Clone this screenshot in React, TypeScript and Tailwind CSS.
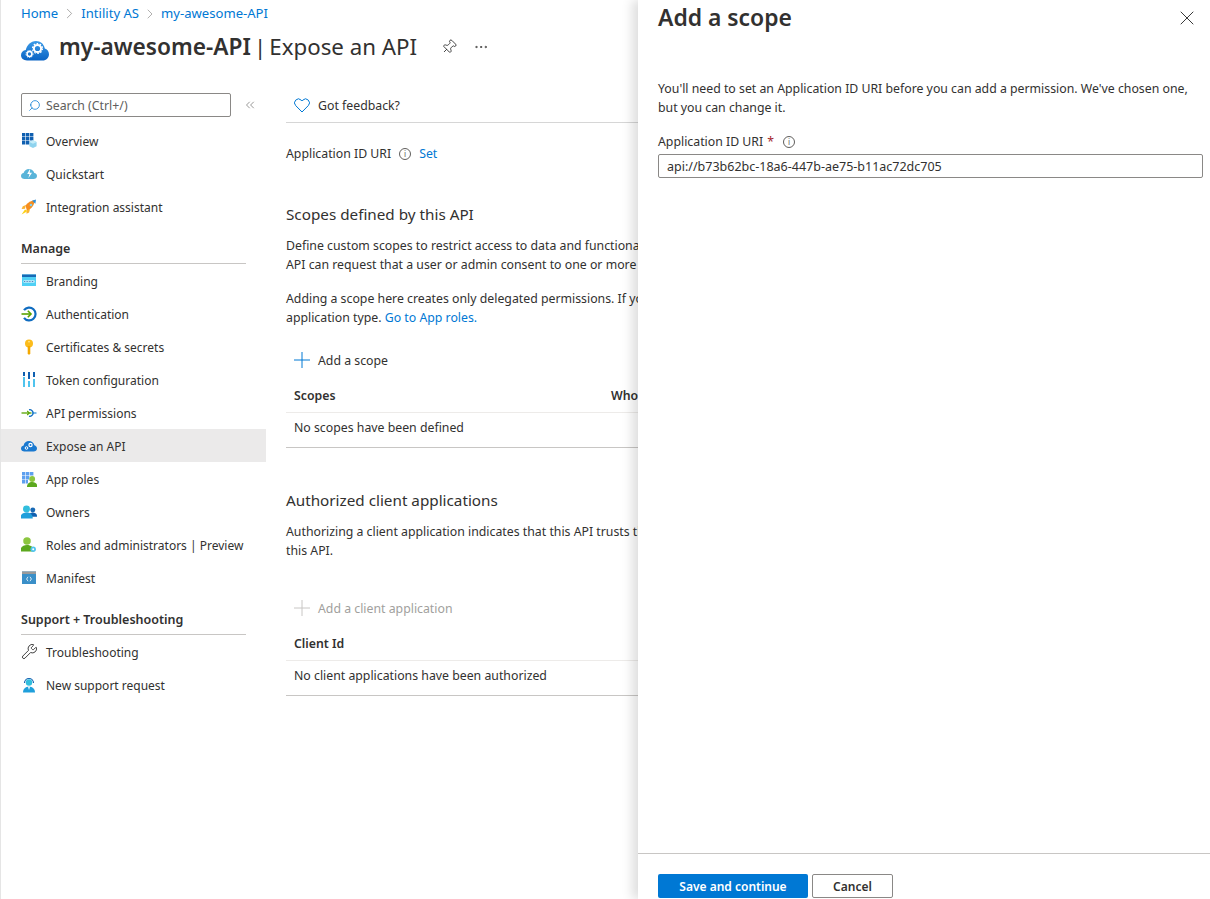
import type { ReactNode } from "react";
import { ChevronRight, ChevronsLeft, Ellipsis, Pin, Search, Wrench, X } from "lucide-react";

function CloudGears({ size }: { size: number }) {
  return (
    <svg width={size} height={size * 0.75} viewBox="0 0 28 21">
      <defs>
        <linearGradient id="cloudBlue" x1="0" y1="0" x2="0" y2="1">
          <stop offset="0" stopColor="#3b9be8" />
          <stop offset="1" stopColor="#0a63c4" />
        </linearGradient>
      </defs>
      <path d="M6 20.5C2.500 20.500 0 18.200 0 15.300c0-2.700 2-4.800 4.800-5.200C5.600 5.600 9.700 1 15 1c4.600 0 7.900 3 8.800 7.400 2.400.7 4.200 3 4.200 5.800 0 3.600-2.800 6.300-6.300 6.300z" fill="url(#cloudBlue)" />
      <circle cx="16.500" cy="8.500" r="3.600" fill="none" stroke="#fff" strokeWidth="2" />
      <circle cx="16.500" cy="8.500" r="5" fill="none" stroke="#fff" strokeWidth="1.200" strokeDasharray="1.600 1.550" />
      <circle cx="8.500" cy="14" r="2.400" fill="none" stroke="#fff" strokeWidth="1.500" />
      <circle cx="8.500" cy="14" r="3.500" fill="none" stroke="#fff" strokeWidth="1" strokeDasharray="1.200 1.100" />
    </svg>
  );
}

function Person({ x, y, s, head, body }: { x: number; y: number; s: number; head: string; body: string }) {
  return (
    <g>
      <circle cx={x} cy={y} r={2.9 * s} fill={head} />
      <path d={`M${x - 5.2 * s} ${y + 8 * s}c0-${3.4 * s} ${2.2 * s}-${5 * s} ${5.2 * s}-${5 * s}s${5.2 * s} ${1.6 * s} ${5.2 * s} ${5 * s}z`} fill={body} />
    </g>
  );
}

const icons: Record<string, ReactNode> = {
  overview: (
    <svg width="16" height="16" viewBox="0 0 16 16">
      <path d="M1 0h3.400v3.400H1zM5 0h3.400v3.400H5zM9 0h3.400v3.400H9zM1 4h3.400v3.400H1zM5 4h3.400v3.400H5zM9 4h3.400v3.400H9zM1 8h3.400v3.400H1zM5 8h3.400v3.400H5z" fill="#0f5fb0" />
      <path d="M12 7.200l3.600 1.800v4.200L12 15l-3.600-1.800V9z" fill="#8fd3ee" />
      <path d="M8.400 9l3.600 1.800L15.600 9 12 7.200z" fill="#c4ecf8" />
    </svg>
  ),
  quickstart: (
    <svg width="16" height="16" viewBox="0 0 16 16">
      <path d="M3.600 13C1.600 13 0 11.700 0 10c0-1.500 1.100-2.700 2.600-2.900C3.100 4.800 5.300 3 8 3c2.600 0 4.800 1.700 5.300 4.100 1.600.2 2.700 1.400 2.700 2.900 0 1.700-1.500 3-3.500 3z" fill="#59b4d9" />
      <path d="M9.300 2.500L6.200 8h2.300l-1.200 4.200L11 6.800H8.700z" fill="#fff" />
    </svg>
  ),
  rocket: (
    <svg width="16" height="16" viewBox="0 0 16 16">
      <path d="M4.500 6.500C6.500 3.500 10.500 1.500 14 1c-.3 3.700-2.500 7.500-5.500 9.500L6 12z" fill="#f78d1e" />
      <path d="M11 1.800L15 .5l-.6 4.300z" fill="#2f8fd8" />
      <path d="M5 6L1.800 7.200.6 10l3.400-.3zM9 10l-.9 3.400-2.600 1.400-.1-3.300z" fill="#f9b233" />
      <path d="M4 10.500L.5 15.500l5-2.700.5-1z" fill="#fcd116" />
      <circle cx="10" cy="6" r="1.300" fill="#7fd0f2" />
    </svg>
  ),
  branding: (
    <svg width="16" height="16" viewBox="0 0 16 16">
      <rect x="1" y="1.500" width="14" height="11.500" fill="#4fd0f5" />
      <rect x="1" y="1.500" width="14" height="2.500" fill="#1769b5" />
      <path d="M2.500 7.500h11v2h-11z" fill="#fff" />
      <path d="M3 8.500h10" stroke="#1769b5" strokeWidth="0.800" strokeDasharray="1 0.600" />
    </svg>
  ),
  auth: (
    <svg width="16" height="16" viewBox="0 0 16 16">
      <path d="M3 4.200A6.400 6.400 0 1 1 3 11.800" fill="none" stroke="#0f6cc0" strokeWidth="2.200" />
      <path d="M.5 8h9" stroke="#57a300" strokeWidth="1.600" />
      <path d="M6.800 4.800L10 8l-3.200 3.200" fill="none" stroke="#57a300" strokeWidth="1.600" />
    </svg>
  ),
  key: (
    <svg width="16" height="16" viewBox="0 0 16 16">
      <circle cx="8" cy="4.500" r="4" fill="#fcbc1c" />
      <path d="M6.700 7h2.600v7.500L8 16l-1.300-1.500z" fill="#f4a800" />
      <rect x="7.200" y="2" width="1.600" height="1.400" fill="#fde58a" />
    </svg>
  ),
  token: (
    <svg width="16" height="16" viewBox="0 0 16 16">
      <path d="M2 5h2v10H2zM7 9h2v6H7zM12 7h2v8h-2z" fill="#50c4ee" />
      <path d="M2 0h2v4H2zM7 0h2v7H7zM12 0h2v5h-2z" fill="#0f5fb0" />
    </svg>
  ),
  api: (
    <svg width="16" height="16" viewBox="0 0 16 16">
      <path d="M.5 8h10" stroke="#57a300" strokeWidth="1.300" />
      <path d="M11 8h4.500" stroke="#3a96dd" strokeWidth="1.300" />
      <path d="M8 4.800a3.300 3.300 0 1 1 0 6.400" fill="none" stroke="#0f6cc0" strokeWidth="1.300" />
      <path d="M6.200 6L8.300 8l-2.100 2" fill="none" stroke="#57a300" strokeWidth="1.100" />
    </svg>
  ),
  expose: (
    <svg width="16" height="16" viewBox="0 0 16 16">
      <path d="M3.400 13.500C1.500 13.500 0 12.200 0 10.400c0-1.500 1.100-2.700 2.600-3C3.100 4.800 5.300 3 8 3c2.600 0 4.800 1.700 5.400 4.200 1.500.4 2.600 1.600 2.600 3.200 0 1.800-1.500 3.100-3.400 3.100z" fill="#1a79d0" />
      <circle cx="9.500" cy="7" r="1.600" fill="none" stroke="#fff" strokeWidth="1.200" />
      <circle cx="5.500" cy="10" r="1.300" fill="none" stroke="#fff" strokeWidth="1" />
    </svg>
  ),
  approles: (
    <svg width="16" height="16" viewBox="0 0 16 16">
      <path d="M1 1h3.400v3.400H1zM5 1h3.400v3.400H5zM9 1h3.400v3.400H9zM1 5h3.400v3.400H1zM5 5h3.400v3.400H5zM1 9h3.400v3.400H1zM5 9h2v3.400H5z" fill="#5ea0ef" />
      <Person x={11.200} y={8} s={1} head="#8cc63f" body="#5ca81e" />
    </svg>
  ),
  owners: (
    <svg width="16" height="16" viewBox="0 0 16 16">
      <Person x={11.800} y={6} s={0.85} head="#1769b5" body="#0f5fb0" />
      <Person x={5.500} y={5} s={1.200} head="#32bedd" body="#1f9fdb" />
    </svg>
  ),
  roles: (
    <svg width="16" height="16" viewBox="0 0 16 16">
      <Person x={6} y={4} s={1.300} head="#8cc63f" body="#5ca81e" />
      <circle cx="12.200" cy="12.200" r="2.700" fill="#50c4ee" />
      <circle cx="12.200" cy="12.200" r="1" fill="#fff" />
    </svg>
  ),
  manifest: (
    <svg width="16" height="16" viewBox="0 0 16 16">
      <rect x="1" y="1.500" width="14" height="12.500" fill="#3a8fc8" />
      <rect x="1" y="1.500" width="14" height="2.500" fill="#9a9a9a" />
      <path d="M7 6.800L5.600 9 7 11.200M9 6.800L10.400 9 9 11.200" fill="none" stroke="#fff" strokeWidth="0.800" />
    </svg>
  ),
  wrench: <Wrench className="w-[17px] h-[17px] shrink-0 text-[#222]" strokeWidth={1.200} />,
  support: (
    <svg width="16" height="16" viewBox="0 0 16 16">
      <path d="M3.500 6a4.500 4.500 0 0 1 9 0" fill="none" stroke="#0f5fb0" strokeWidth="1.200" />
      <circle cx="8" cy="5.500" r="3.200" fill="#32bedd" />
      <path d="M2 15.500c0-3.800 2.600-5.800 6-5.800s6 2 6 5.800z" fill="#1f9fdb" />
      <path d="M7 9.800h2L8 13z" fill="#fff" />
    </svg>
  ),
};

type NavEntry = { label: string; icon: string; active?: boolean };

const topLinks: NavEntry[] = [
  { label: "Overview", icon: "overview" },
  { label: "Quickstart", icon: "quickstart" },
  { label: "Integration assistant", icon: "rocket" },
];

const manageLinks: NavEntry[] = [
  { label: "Branding", icon: "branding" },
  { label: "Authentication", icon: "auth" },
  { label: "Certificates & secrets", icon: "key" },
  { label: "Token configuration", icon: "token" },
  { label: "API permissions", icon: "api" },
  { label: "Expose an API", icon: "expose", active: true },
  { label: "App roles", icon: "approles" },
  { label: "Owners", icon: "owners" },
  { label: "Roles and administrators | Preview", icon: "roles" },
  { label: "Manifest", icon: "manifest" },
];

const supportLinks: NavEntry[] = [
  { label: "Troubleshooting", icon: "wrench" },
  { label: "New support request", icon: "support" },
];

function NavRow({ link }: { link: NavEntry }) {
  return (
    <div className={`h-[33px] pl-5 flex items-center gap-[9px] text-[12px] ${link.active ? "bg-[#ebeaea]" : ""}`}>
      <span className="w-4 h-4 flex items-center justify-center shrink-0">{icons[link.icon]}</span>
      <span className="whitespace-nowrap pt-[2px]">{link.label}</span>
    </div>
  );
}

function SectionHeading({ children }: { children: ReactNode }) {
  return (
    <div className="mx-5 h-[41px] pt-[17px] border-b border-[#c8c6c4] text-[12.500px] font-semibold leading-[18px] text-[#323130]">
      {children}
    </div>
  );
}

function InfoIcon() {
  return (
    <span className="w-3 h-3 rounded-full border border-[#605e5c] text-[#605e5c] flex items-center justify-center text-[8px] leading-none">
      i
    </span>
  );
}

function PlusIcon({ color }: { color: string }) {
  return (
    <svg width="16" height="16" viewBox="0 0 16 16" className="-mt-[2px]">
      <path d="M8 0v16M0 8h16" stroke={color} strokeWidth="1" />
    </svg>
  );
}

export default function App() {
  return (
    <div className="relative w-[1210px] h-[899px] overflow-hidden bg-white border-l border-[#e5e5e5] text-[12.300px] leading-[19px] text-[#323130] font-['Noto_Sans','Open_Sans',sans-serif]">
      {/* Header */}
      <div className="pl-5 pt-[2px] h-[25px] flex items-center gap-[3px] text-[#0078d4] text-[13.100px]">
        <span>Home</span>
        <ChevronRight className="w-[17px] h-[17px] text-[#8a8886]" strokeWidth={1} />
        <span>Intility AS</span>
        <ChevronRight className="w-[16px] h-[16px] text-[#8a8886]" strokeWidth={1} />
        <span>my-awesome-API</span>
      </div>
      <div className="pl-5 h-[44px] flex items-center">
        <span className="w-[28px] mr-[10px] mt-[7px] flex">
          <CloudGears size={28} />
        </span>
        <h1 className="flex text-[22.300px] leading-[30px] whitespace-nowrap">
          <span className="font-semibold text-[22.700px]">my-awesome-API</span>
          <span className="mx-[3px]">|</span>
          <span>Expose an API</span>
        </h1>
        <Pin className="w-4 h-4 ml-[24px] rotate-45 text-[#222]" strokeWidth={1.200} />
        <Ellipsis className="w-4 h-4 ml-[16px] text-[#323130]" strokeWidth={1.200} />
      </div>

      <div className="flex mt-[24px]">
        {/* Sidebar */}
        <aside className="w-[265px] shrink-0">
          <div className="flex items-center pl-5 mb-[7px]">
            <div className="w-[210px] h-[24px] border border-[#8a8886] rounded-[2px] flex items-center pl-[6px] gap-[5px] text-[#605e5c]">
              <Search className="w-[13px] h-[13px] -scale-x-100 text-[#0078d4]" strokeWidth={1.400} />
              <span>Search (Ctrl+/)</span>
            </div>
            <ChevronsLeft className="w-[14px] h-[14px] ml-[12px] text-[#605e5c]" strokeWidth={1.100} />
          </div>
          {topLinks.map((link) => (
            <NavRow key={link.label} link={link} />
          ))}
          <SectionHeading>Manage</SectionHeading>
          {manageLinks.map((link) => (
            <NavRow key={link.label} link={link} />
          ))}
          <SectionHeading>Support + Troubleshooting</SectionHeading>
          {supportLinks.map((link) => (
            <NavRow key={link.label} link={link} />
          ))}
        </aside>

        {/* Main column, runs on under the blade */}
        <main className="ml-5 w-[700px] shrink-0 -mt-[5px]">
          <div className="h-[35px] border-b border-[#d6d6d6] pl-2 flex items-center gap-[8px]">
            <svg width="16" height="15" viewBox="0 0 16 15">
              <path d="M8 14L1.700 7.600a3.900 3.900 0 0 1 0-5.500 3.900 3.900 0 0 1 5.500 0L8 3l.8-.9a3.900 3.900 0 0 1 5.500 0 3.900 3.900 0 0 1 0 5.500z" fill="none" stroke="#0078d4" strokeWidth="1" />
            </svg>
            <span>Got feedback?</span>
          </div>

          <div className="mt-[21px] flex items-center gap-[8px]">
            <span>Application ID URI</span>
            <InfoIcon />
            <span className="text-[#0078d4]">Set</span>
          </div>

          <h2 className="mt-[40px] text-[15.250px] leading-[22px]">Scopes defined by this API</h2>
          <p className="mt-[11px] whitespace-nowrap">
            Define custom scopes to restrict access to data and functionality protected by the API.
            <br />
            API can request that a user or admin consent to one or more of these.
          </p>
          <p className="mt-[15px] whitespace-nowrap">
            Adding a scope here creates only delegated permissions. If you are looking to create
            <br />
            application type. <span className="text-[#0078d4]">Go to App roles.</span>
          </p>

          <div className="mt-[17px] h-[33px] pl-2 flex items-center gap-[8px]">
            <PlusIcon color="#0078d4" />
            <span>Add a scope</span>
          </div>
          <div className="h-[36px] pl-2 pt-[2px] border-b border-[#edebe9] flex items-center font-semibold">
            <span className="w-[317px]">Scopes</span>
            <span>Who can consent</span>
          </div>
          <div className="h-[35px] pl-2 pt-[5px] border-b border-[#c8c6c4]">No scopes have been defined</div>

          <h2 className="mt-[41px] text-[15.250px] leading-[22px]">Authorized client applications</h2>
          <p className="mt-[11px] whitespace-nowrap">
            Authorizing a client application indicates that this API trusts the application and users
            <br />
            this API.
          </p>

          <div className="mt-[32px] h-[33px] pl-2 flex items-center gap-[8px] text-[#a19f9d]">
            <PlusIcon color="#c8c6c4" />
            <span>Add a client application</span>
          </div>
          <div className="h-[36px] pl-2 pt-[2px] border-b border-[#edebe9] flex items-center font-semibold">Client Id</div>
          <div className="h-[35px] pl-2 pt-[5px] border-b border-[#c8c6c4]">No client applications have been authorized</div>
        </main>
      </div>

      {/* Blade overlay */}
      <section className="absolute top-0 right-0 bottom-0 w-[572px] bg-white shadow-[-6px_0_10px_rgba(0,0,0,0.13)] flex flex-col">
        <div className="flex-1 pl-5 pr-[7px]">
          <div className="flex items-start justify-between h-[70px]">
            <h2 className="text-[22.900px] leading-[30px] pt-[3px] font-semibold">Add a scope</h2>
            <X className="w-6 h-6 mt-[6px] mr-[4px] text-[#222]" strokeWidth={0.900} />
          </div>
          <p className="mt-[9px] w-[540px]">
            You'll need to set an Application ID URI before you can add a permission. We've chosen one, but you can change it.
          </p>
          <div className="mt-[15px] flex items-center h-[19px]">
            <span>Application ID URI</span>
            <span className="text-[#a4262c] ml-[4px] mr-[9px]">*</span>
            <InfoIcon />
          </div>
          <div className="mt-[3px] h-[24px] border border-[#8a8886] rounded-[2px] pl-2 flex items-center text-[12.500px]">
            api://b73b62bc-18a6-447b-ae75-b11ac72dc705
          </div>
        </div>
        <div className="h-[46px] border-t border-[#c8c6c4] pl-5 pt-[20px] flex items-start gap-1 shrink-0">
          <button className="w-[150px] h-[24px] rounded-[2px] bg-[#0078d4] text-white font-semibold text-[12px] flex items-center justify-center">
            Save and continue
          </button>
          <button className="w-[81px] h-[24px] rounded-[2px] border border-[#8a8886] font-semibold text-[12px] flex items-center justify-center">
            Cancel
          </button>
        </div>
      </section>
    </div>
  );
}
